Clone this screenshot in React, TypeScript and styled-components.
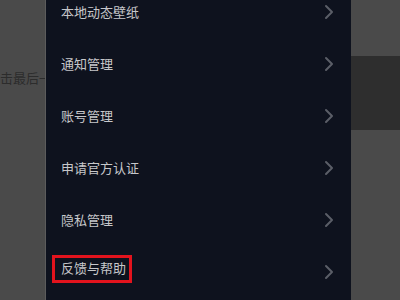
import React from "react";
import styled, { createGlobalStyle } from "styled-components";

const Global = createGlobalStyle`
  html, body { margin: 0; padding: 0; }
  body {
    width: 400px;
    height: 300px;
    overflow: hidden;
    font-family: "Noto Sans CJK SC", "Noto Sans", sans-serif;
    background: #4a4a4a;
  }
`;

const Screen = styled.div`
  display: flex;
  width: 400px;
  height: 300px;
  overflow: hidden;
`;

const LeftStrip = styled.div`
  width: 45px;
  flex: none;
  background: #4a4a4a;
  border-right: 1px solid #5c5c5c;
  overflow: hidden;
  padding-top: 69px;
  box-sizing: content-box;
`;

const BackText = styled.div`
  margin-left: -13px;
  white-space: nowrap;
  font-size: 13px;
  line-height: 18px;
  color: #2c2c2c;
`;

const Panel = styled.div`
  width: 305px;
  flex: none;
  background: #0e121e;
  overflow: hidden;
`;

const List = styled.ul`
  list-style: none;
  margin: -14px 0 0 0;
  padding: 0 17px 0 15px;
`;

const Row = styled.li`
  height: 52px;
  display: flex;
  align-items: center;
  justify-content: space-between;
`;

const Label = styled.span<{ $marked?: boolean }>`
  font-size: 13px;
  line-height: 18px;
  color: #c6c7ca;
  white-space: nowrap;
  ${(p) =>
    p.$marked
      ? `
    border: 3px solid #e3131d;
    padding: 1px 3px 3px 6px;
    margin-left: -9px;
    margin-bottom: 6px;
  `
      : ""}
`;

const Chevron = styled.svg`
  width: 10px;
  height: 16px;
  flex: none;
`;

const RightStrip = styled.div`
  flex: 1;
  display: flex;
  flex-direction: column;
`;

const Block = styled.div<{ $h?: number; $dark?: boolean }>`
  background: ${(p) => (p.$dark ? "#2e2e2e" : "#4a4a4a")};
  ${(p) => (p.$h ? `height: ${p.$h}px; flex: none;` : "flex: 1;")}
`;

const items = [
  "本地动态壁纸",
  "通知管理",
  "账号管理",
  "申请官方认证",
  "隐私管理",
  "反馈与帮助",
];

export default function App() {
  return (
    <>
      <Global />
      <Screen>
        <LeftStrip>
          <BackText>点击最后一</BackText>
        </LeftStrip>
        <Panel>
          <List>
            {items.map((t, i) => (
              <Row key={t}>
                <Label $marked={i === items.length - 1}>{t}</Label>
                <Chevron viewBox="0 0 10 16">
                  <path
                    d="M2 2 L8 8 L2 14"
                    fill="none"
                    stroke="#5b5e67"
                    strokeWidth="2"
                    strokeLinecap="round"
                    strokeLinejoin="round"
                  />
                </Chevron>
              </Row>
            ))}
          </List>
        </Panel>
        <RightStrip>
          <Block $h={56} />
          <Block $h={74} $dark />
          <Block />
        </RightStrip>
      </Screen>
    </>
  );
}
